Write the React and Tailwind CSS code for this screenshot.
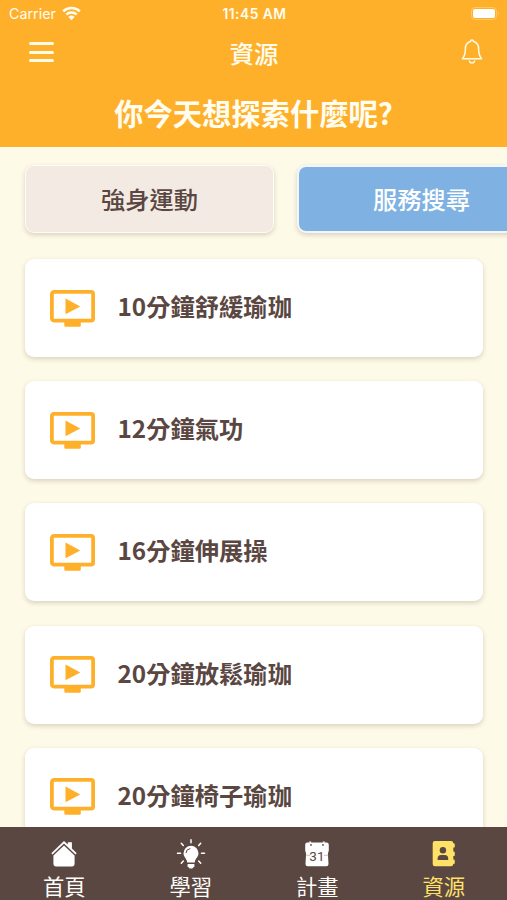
const videos = [
  "10分鐘舒緩瑜珈",
  "12分鐘氣功",
  "16分鐘伸展操",
  "20分鐘放鬆瑜珈",
  "20分鐘椅子瑜珈",
];

function WifiIcon() {
  return (
    <svg className="ml-[6px] h-[15px] w-[19px]" viewBox="0 0 19 15" fill="none" stroke="#fffdf0" strokeWidth="2.5">
      <path d="M1.2 5.4a11.8 11.8 0 0 1 16.6 0" />
      <path d="M4.3 8.7a7.4 7.4 0 0 1 10.4 0" />
      <path d="M9.5 14.2 6.4 11a4.5 4.5 0 0 1 6.2 0z" fill="#fffdf0" stroke="none" />
    </svg>
  );
}

function BatteryIcon() {
  return (
    <svg className="h-[13px] w-[29px]" viewBox="0 0 29 13">
      <rect x="0.5" y="0.5" width="25" height="12" rx="3.5" fill="none" stroke="#ffc763" />
      <rect x="2" y="2" width="22" height="9" rx="2" fill="#fff" />
      <path d="M27 4.5q2 2 0 4z" fill="#ffc763" />
    </svg>
  );
}

function BellIcon() {
  return (
    <svg className="h-[26px] w-[22px]" viewBox="0 0 22 26" fill="none" stroke="#fffbe9" strokeWidth="1.5" strokeLinejoin="round" strokeLinecap="round">
      <path d="M9.5 2.6a1.5 1.5 0 0 1 3 0C16 3.5 17.6 6.2 17.6 9.5c0 5 .8 7.7 2.9 10.2h-19c2.1-2.5 2.9-5.2 2.9-10.2 0-3.3 1.6-6 5.1-6.9z" />
      <path d="M8.5 22.2a2.6 2.6 0 0 0 5 0" />
    </svg>
  );
}

function VideoIcon() {
  return (
    <svg className="h-[37px] w-[45px] shrink-0" viewBox="0 0 45 37">
      <rect x="1.9" y="1.9" width="41.2" height="28.7" rx="2" fill="none" stroke="#ffb02b" strokeWidth="3.8" />
      <path d="M15.5 8.600 30.300 16.500 15.500 24.300z" fill="#ffb02b" />
      <path d="M14.300 31h16.500v4.400q0 1.300-1.300 1.300H15.600q-1.300 0-1.300-1.300z" fill="#ffb02b" />
    </svg>
  );
}

function HomeIcon() {
  return (
    <svg className="h-[30px] w-[30px]" viewBox="0 0 30 30">
      <path d="M2.300 15.300 15 2.900l3.800 3.700V4.300h4.100v6.300l4.800 4.700-1.200 1.200L15 5.400 3.500 16.500z" fill="#fff" />
      <path d="M15 7.400 25.600 17.600v8.500q0 2.300-2.300 2.300H6.700q-2.300 0-2.300-2.300v-8.500z" fill="#fff" />
    </svg>
  );
}

function BulbIcon() {
  return (
    <svg className="h-[30px] w-[30px] overflow-visible" viewBox="0 0 30 30" fill="none">
      <g stroke="#fff" strokeWidth="1.500" strokeLinecap="round">
        <path d="M15 1.700v3M5.300 5.300l2 2.200M24.700 5.300l-2 2.200M1.500 15.300h3M25.500 15.300h3M5.300 25.200l2-2.200M24.700 25.200l-2-2.200" />
      </g>
      <path d="M15 7.800a7.500 7.500 0 0 0-7.500 7.500c0 4.100 3.700 5.300 3.700 9.300h7.600c0-4 3.700-5.200 3.700-9.300A7.500 7.500 0 0 0 15 7.800z" fill="#fff" />
      <path d="M11.600 26h6.800v2.200l-2.100 2.300h-2.600l-2.100-2.300z" fill="#fff" />
      <path d="M10 15.100a4.700 4.700 0 0 1 4.300-4.500" stroke="#5a4742" strokeWidth="1" />
    </svg>
  );
}

function CalendarIcon() {
  return (
    <svg className="h-[30px] w-[30px]" viewBox="0 0 30 30">
      <path d="M5.400 4.600h19.200q2.200 0 2.200 2.200v5.800l-.9 3.200.6 10.200q.1 2.300-2.200 2.300H5.700q-2.300 0-2.200-2.300l.6-10.200-.9-3.200V6.800q0-2.200 2.200-2.200z" fill="#fff" />
      <g fill="#5a4742"><circle cx="9" cy="6.900" r=".9" /><circle cx="21" cy="6.900" r=".9" /></g>
      <path d="M8.200 4.700V3.500M21.800 4.700V3.500" stroke="#fff" strokeWidth="2" />
      <path d="M3.500 17.300H8M22 17.300h4.500" stroke="#a49a97" strokeWidth=".6" />
      <text x="14.900" y="22.500" textAnchor="middle" fontFamily="Roboto, sans-serif" fontSize="13.500" fill="#5a4742">31</text>
    </svg>
  );
}

function ContactsIcon() {
  return (
    <svg className="h-[30px] w-[30px]" viewBox="0 0 30 30">
      <path d="M6 3.100h16q2.300 0 2.300 2.300v20.500q0 2.300-2.300 2.300H6q-2.300 0-2.300-2.300V5.400Q3.700 3.100 6 3.100z" fill="#ffe168" />
      <path d="M23 5.200h1.600q1.200 0 1.200 1.200v2q0 1.200-1.200 1.200H23zM23 13.500h1.600q1.200 0 1.200 1.200v2.200q0 1.200-1.200 1.200H23zM23 21.500h1.600q1.200 0 1.200 1.200v2q0 1.200-1.200 1.200H23z" fill="#ffe168" />
      <circle cx="13.900" cy="12.300" r="3.200" fill="#5a4742" />
      <path d="M8.600 21.900v-1.300q0-3.700 3.500-3.700h3.600q3.500 0 3.500 3.700v1.300z" fill="#5a4742" />
    </svg>
  );
}

const navigation = [
  { label: "首頁", Icon: HomeIcon, color: "text-[#fffdf9]" },
  { label: "學習", Icon: BulbIcon, color: "text-[#fffdf9]" },
  { label: "計畫", Icon: CalendarIcon, color: "text-[#fffdf9]" },
  { label: "資源", Icon: ContactsIcon, color: "text-[#ffe168]" },
];

export default function App() {
  return (
    <div className="flex h-[900px] w-[507px] flex-col overflow-hidden bg-[#fefae8] font-['Noto_Sans_CJK_TC',sans-serif]">
      <header className="h-[147px] shrink-0 bg-[#ffb02b] text-[#fffdf0]">
        <div className="grid h-[27px] grid-cols-3 items-center pr-[7px] pl-[9px] font-['Inter',sans-serif]">
          <div className="flex items-center"><span className="text-[14.300px] leading-4">Carrier</span><WifiIcon /></div>
          <span className="pt-px text-center text-[13.800px] font-semibold tracking-[0.500px]">11:45 AM</span>
          <div className="flex justify-end"><BatteryIcon /></div>
        </div>
        <div className="grid h-[50px] grid-cols-[1fr_auto_1fr] items-center pr-[24px] pl-[29px]">
          <div className="flex w-[25px] flex-col gap-[5.500px]">
            <span className="h-[3px] rounded-full bg-[#fffbe9]" />
            <span className="h-[3px] rounded-full bg-[#fffbe9]" />
            <span className="h-[3px] rounded-full bg-[#fffbe9]" />
          </div>
          <h1 className="pt-[2px] pr-[4px] text-[24.300px] leading-[30px] font-medium">資源</h1>
          <div className="flex justify-end"><BellIcon /></div>
        </div>
        <h2 className="pt-[13.500px] text-center text-[29.300px] leading-[42px] font-bold">你今天想探索什麼呢?</h2>
      </header>

      <main className="min-h-0 flex-1 overflow-hidden">
        <div className="flex gap-[23px] pt-[18px] pl-[25px] text-[24.300px] font-medium">
          <button className="h-[68px] w-[249px] shrink-0 rounded-[9px] border-[1.500px] border-[#fdfcf8] bg-[#f3ebe3] text-[#5a4742] shadow-[0_2px_5px_rgba(80,70,30,0.220)]">強身運動</button>
          <button className="h-[68px] w-[249px] shrink-0 rounded-[9px] border-2 border-[#f0f7fc] bg-[#7fb1e2] text-[#fdfefe] shadow-[0_2px_5px_rgba(80,70,30,0.220)]">服務搜尋</button>
        </div>
        <ul className="flex flex-col gap-[24.200px] pt-[26px] pr-[24px] pl-[25px]">
          {videos.map((title) => (
            <li key={title} className="flex h-[98px] shrink-0 items-center rounded-[9px] bg-white pl-[25px] shadow-[0_2px_5px_rgba(80,70,30,0.220)]">
              <VideoIcon />
              <span className="ml-[22.500px] pb-[4px] text-[24.300px] leading-[36px] font-bold text-[#5a4742]">{title}</span>
            </li>
          ))}
        </ul>
      </main>

      <nav className="grid h-[73px] shrink-0 grid-cols-4 bg-[#5a4742] pt-[11px] pl-px">
        {navigation.map(({ label, Icon, color }) => (
          <a key={label} className={`flex flex-col items-center ${color}`}>
            <Icon />
            <span className="mt-[3px] text-[21.300px] leading-[30px]">{label}</span>
          </a>
        ))}
      </nav>
    </div>
  );
}
